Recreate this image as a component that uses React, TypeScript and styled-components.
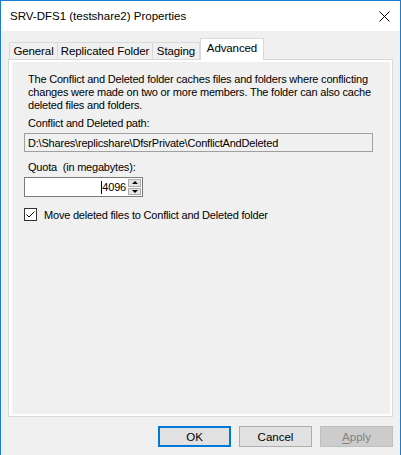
import styled, { createGlobalStyle } from "styled-components";

const GlobalStyle = createGlobalStyle`
  html, body {
    margin: 0;
    padding: 0;
    background: #f0f0f0;
  }
  * {
    box-sizing: border-box;
  }
`;

const Window = styled.div`
  width: 401px;
  height: 455px;
  display: flex;
  flex-direction: column;
  background: #f0f0f0;
  border: 1px solid #1a7dd0;
  border-bottom: none;
  font-family: "Liberation Sans", Arial, sans-serif;
  font-size: 11px;
  letter-spacing: -0.2px;
  color: #000;
`;

const TitleBar = styled.div`
  height: 30px;
  background: #fff;
  display: flex;
  align-items: center;
  justify-content: space-between;
  padding: 0 10px 0 9px;
  font-size: 11.5px;
  letter-spacing: 0;
`;

const CloseButton = styled.svg`
  width: 11px;
  height: 11px;
`;

const Content = styled.div`
  flex: 1;
  display: flex;
  flex-direction: column;
  padding: 8px 7px 0 7px;
`;

const TabRow = styled.div`
  display: flex;
  align-items: flex-end;
  height: 21px;
  padding-left: 1px;
  position: relative;
  z-index: 1;
`;

const Tab = styled.div<{ $active?: boolean; $width: number }>`
  width: ${(p) => p.$width}px;
  height: ${(p) => (p.$active ? 22 : 18)}px;
  display: flex;
  align-items: center;
  justify-content: center;
  border: 1px solid #d9d9d9;
  border-bottom: ${(p) => (p.$active ? "none" : "1px solid #d9d9d9")};
  border-left: ${(p) => (p.$active ? "1px solid #d9d9d9" : "none")};
  background: ${(p) => (p.$active ? "#fff" : "#f0f0f0")};
  padding-bottom: ${(p) => (p.$active ? 3 : 0)}px;
  white-space: nowrap;
  font-size: 11.5px;
  letter-spacing: -0.1px;

  &:first-child {
    border-left: 1px solid #d9d9d9;
  }
`;

const Panel = styled.div`
  height: 358px;
  margin-top: -1px;
  border: 1px solid #d9d9d9;
  background: #fff;
  padding: 2px 2px 2px 3px;
`;

const Page = styled.div`
  height: 100%;
  background: #f0f0f0;
  padding: 11px 17px 0 12px;
  display: flex;
  flex-direction: column;
`;

const Description = styled.p`
  margin: 0 0 5px;
  padding-left: 4px;
  line-height: 13px;
  white-space: nowrap;
`;

const Label = styled.div`
  padding-left: 4px;
  line-height: 13px;
  margin-bottom: 3px;
`;

const PathBox = styled.div`
  height: 19px;
  border: 1px solid #a0a0a0;
  display: flex;
  align-items: center;
  padding-left: 3px;
  margin-bottom: 9px;
`;

const SpinField = styled.div`
  width: 119px;
  height: 20px;
  display: flex;
  border: 1px solid #7a7a7a;
  background: #fff;
  margin-bottom: 11px;
`;

const SpinValue = styled.div`
  flex: 1;
  display: flex;
  align-items: center;
  justify-content: flex-end;
  padding-right: 2px;
`;

const Caret = styled.span`
  width: 1px;
  height: 13px;
  background: #000;
`;

const SpinButtons = styled.div`
  width: 14px;
  display: flex;
  flex-direction: column;
  gap: 1px;
  padding: 1px 1px 1px 0;
`;

const SpinButton = styled.div`
  flex: 1;
  display: flex;
  align-items: center;
  justify-content: center;
  background: #e5e5e5;
  border: 1px solid #acacac;
`;

const Arrow = styled.span<{ $up?: boolean }>`
  width: 0;
  height: 0;
  border-left: 3px solid transparent;
  border-right: 3px solid transparent;
  ${(p) =>
    p.$up ? "border-bottom: 3px solid #000;" : "border-top: 3px solid #000;"}
`;

const CheckRow = styled.label`
  display: flex;
  align-items: center;
  gap: 7px;
`;

const CheckBox = styled.span`
  width: 13px;
  height: 13px;
  border: 1px solid #333;
  background: #fff;
  display: flex;
  align-items: center;
  justify-content: center;
`;

const ButtonRow = styled.div`
  display: flex;
  justify-content: flex-end;
  gap: 8px;
  padding-top: 9px;
`;

const Button = styled.div<{ $variant?: "default" | "disabled" }>`
  width: 73px;
  height: 21px;
  display: flex;
  align-items: center;
  justify-content: center;
  background: ${(p) => (p.$variant === "disabled" ? "#cccccc" : "#e1e1e1")};
  color: ${(p) => (p.$variant === "disabled" ? "#838383" : "#000")};
  border: ${(p) =>
    p.$variant === "default"
      ? "2px solid #0078d7"
      : p.$variant === "disabled"
      ? "1px solid #bfbfbf"
      : "1px solid #adadad"};
  font-size: 11.5px;
  letter-spacing: 0;

  u {
    text-decoration-thickness: 1px;
    text-underline-offset: 2px;
  }
`;

export default function App() {
  return (
    <>
      <GlobalStyle />
      <Window>
        <TitleBar>
          <span>SRV-DFS1 (testshare2) Properties</span>
          <CloseButton viewBox="0 0 11 11">
            <path d="M0.5 0.5 L10.5 10.5 M10.5 0.5 L0.5 10.5" stroke="#000" strokeWidth="1" />
          </CloseButton>
        </TitleBar>
        <Content>
          <TabRow>
            <Tab $width={49}>General</Tab>
            <Tab $width={95}>Replicated Folder</Tab>
            <Tab $width={47}>Staging</Tab>
            <Tab $width={64} $active>
              Advanced
            </Tab>
          </TabRow>
          <Panel>
            <Page>
              <Description>
                The Conflict and Deleted folder caches files and folders where conflicting
                <br />
                changes were made on two or more members. The folder can also cache
                <br />
                deleted files and folders.
              </Description>
              <Label>Conflict and Deleted path:</Label>
              <PathBox>D:\Shares\replicshare\DfsrPrivate\ConflictAndDeleted</PathBox>
              <Label>Quota&nbsp; (in megabytes):</Label>
              <SpinField>
                <SpinValue>
                  <Caret />
                  4096
                </SpinValue>
                <SpinButtons>
                  <SpinButton>
                    <Arrow $up />
                  </SpinButton>
                  <SpinButton>
                    <Arrow />
                  </SpinButton>
                </SpinButtons>
              </SpinField>
              <CheckRow>
                <CheckBox>
                  <svg width="11" height="11" viewBox="0 0 11 11">
                    <path d="M1.5 5.5 L4 8 L9.5 2.5" fill="none" stroke="#000" strokeWidth="1" />
                  </svg>
                </CheckBox>
                Move deleted files to Conflict and Deleted folder
              </CheckRow>
            </Page>
          </Panel>
          <ButtonRow>
            <Button $variant="default">OK</Button>
            <Button>Cancel</Button>
            <Button $variant="disabled">
              <span>
                <u>A</u>pply
              </span>
            </Button>
          </ButtonRow>
        </Content>
      </Window>
    </>
  );
}
